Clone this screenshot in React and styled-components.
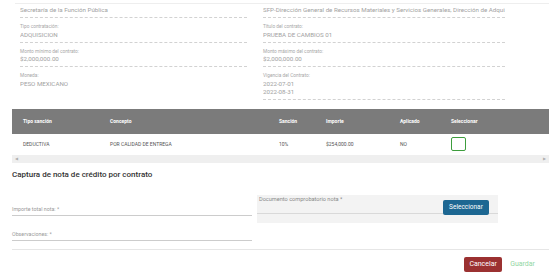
import styled, { createGlobalStyle } from "styled-components";

const GlobalStyle = createGlobalStyle`
  body {
    margin: 0;
    background: #fff;
    font-family: Roboto, "Liberation Sans", sans-serif;
  }
`;

const Page = styled.div`
  width: 554px;
  box-sizing: border-box;
  padding: 0 5px 0 12px;
`;

const TopRule = styled.div`
  margin-left: 3px;
  height: 3px;
  border-bottom: 1px solid #eeeeee;
`;

const InfoGrid = styled.div`
  display: grid;
  grid-template-columns: 227px 242px;
  column-gap: 16px;
  row-gap: 5px;
  padding-left: 8px;
  margin-top: 2px;
`;

const Field = styled.div`
  min-width: 0;
  padding-bottom: 3px;
  border-bottom: 1px dashed ${(p) => (p.$noLine ? "transparent" : "#d2d2d2")};
`;

const FieldLabel = styled.div`
  font-size: 4.8px;
  line-height: 7.5px;
  color: #a8a8a8;
`;

const FieldValue = styled.div`
  font-size: 6.2px;
  line-height: 8px;
  color: #a2a2a2;
  white-space: nowrap;
  overflow: hidden;
`;

const Table = styled.table`
  width: 537px;
  margin-top: 9px;
  border-collapse: collapse;
  table-layout: fixed;
`;

const Th = styled.th`
  width: ${(p) => p.$w - 11}px;
  height: 25px;
  padding: 0 0 0 11px;
  background: #7b7b7b;
  color: #fff;
  font-size: 5px;
  font-weight: 700;
  text-align: left;
`;

const Td = styled.td`
  height: 21px;
  padding: 0 0 0 11px;
  font-size: 5px;
  color: #555;
`;

const Check = styled.div`
  width: 13px;
  height: 12px;
  border: 1.5px solid #3d9d3d;
  border-radius: 2px;
`;

const ScrollBar = styled.div`
  width: 537px;
  height: 8px;
  background: #efefef;
  display: flex;
  align-items: center;
  justify-content: space-between;
  padding: 0 3px;
  box-sizing: border-box;
  font-size: 4px;
  color: #b0b0b0;
`;

const Title = styled.h2`
  margin: 6px 0 0;
  font-size: 8px;
  line-height: 12px;
  font-weight: 500;
  color: #333;
`;

const FormGrid = styled.div`
  display: grid;
  grid-template-columns: 240px 241px;
  column-gap: 5px;
  margin-top: 14px;
`;

const FormCol = styled.div`
  display: flex;
  flex-direction: column;
  gap: 15px;
  padding-top: 11px;
`;

const TextField = styled.div`
  padding-bottom: 2px;
  border-bottom: 1px solid #cccccc;
  font-size: 5.3px;
  line-height: 7px;
  color: #9a9a9a;
`;

const DocBox = styled.div`
  height: 28px;
  display: flex;
  align-items: flex-start;
  padding-right: 9px;
  background: linear-gradient(#d9d9d9, #d9d9d9) 0 18px / 100% 1px no-repeat, #f3f3f3;
`;

const DocLabel = styled.div`
  flex: 1;
  padding: 1px 2px;
  font-size: 5.6px;
  line-height: 7px;
  color: #8a8a8a;
`;

const BlueButton = styled.button`
  margin-top: 5px;
  width: 46px;
  height: 15px;
  padding: 0;
  border: none;
  border-radius: 2px;
  background: #1d6792;
  color: #fff;
  font-family: inherit;
  font-size: 6.5px;
`;

const Footer = styled.div`
  margin-top: 8px;
  border-top: 1px solid #e6e6e6;
  display: flex;
  justify-content: flex-end;
  align-items: center;
  gap: 8px;
  padding: 7px 14px 0 0;
`;

const CancelButton = styled.button`
  width: 38px;
  height: 15px;
  padding: 0;
  border: none;
  border-radius: 2px;
  background: #9b3131;
  color: #fff;
  font-family: inherit;
  font-size: 7px;
`;

const TextButton = styled.button`
  padding: 0;
  border: none;
  background: none;
  color: #93d6a3;
  font-family: inherit;
  font-size: 7px;
`;

const info = [
  [null, "Secretaría de la Función Pública", null, "SFP-Dirección General de Recursos Materiales y Servicios Generales, Dirección de Adquisiciones"],
  ["Tipo contratación:", "ADQUISICION", "Título del contrato:", "PRUEBA DE CAMBIOS 01"],
  ["Monto mínimo del contrato:", "$2,000,000.00", "Monto máximo del contrato:", "$2,000,000.00"],
];

const columns = [
  ["Tipo sanción", 87],
  ["Concepto", 169],
  ["Sanción", 47],
  ["Importe", 74],
  ["Aplicado", 51],
  ["Seleccionar", 109],
];

export default function App() {
  return (
    <>
      <GlobalStyle />
      <Page>
        <TopRule />
        <InfoGrid>
          {info.flatMap(([l1, v1, l2, v2]) => [
            <Field key={v1 + "a"}>
              {l1 && <FieldLabel>{l1}</FieldLabel>}
              <FieldValue>{v1}</FieldValue>
            </Field>,
            <Field key={v2 + "b"}>
              {l2 && <FieldLabel>{l2}</FieldLabel>}
              <FieldValue>{v2}</FieldValue>
            </Field>,
          ])}
          <Field $noLine>
            <FieldLabel>Moneda:</FieldLabel>
            <FieldValue>PESO MEXICANO</FieldValue>
          </Field>
          <Field>
            <FieldLabel>Vigencia del Contrato:</FieldLabel>
            <FieldValue>2022-07-01</FieldValue>
            <FieldValue>2022-08-31</FieldValue>
          </Field>
        </InfoGrid>

        <Table>
          <thead>
            <tr>
              {columns.map(([name, w]) => (
                <Th key={name} $w={w}>{name}</Th>
              ))}
            </tr>
          </thead>
          <tbody>
            <tr>
              <Td>DEDUCTIVA</Td>
              <Td>POR CALIDAD DE ENTREGA</Td>
              <Td>10%</Td>
              <Td>$254,000.00</Td>
              <Td>NO</Td>
              <Td><Check /></Td>
            </tr>
          </tbody>
        </Table>
        <ScrollBar>
          <span>◀</span>
          <span>▶</span>
        </ScrollBar>

        <Title>Captura de nota de crédito por contrato</Title>

        <FormGrid>
          <FormCol>
            <TextField>Importe total nota: *</TextField>
            <TextField>Observaciones: *</TextField>
          </FormCol>
          <DocBox>
            <DocLabel>Documento comprobatorio nota *</DocLabel>
            <BlueButton>Seleccionar</BlueButton>
          </DocBox>
        </FormGrid>

        <Footer>
          <CancelButton>Cancelar</CancelButton>
          <TextButton>Guardar</TextButton>
        </Footer>
      </Page>
    </>
  );
}
